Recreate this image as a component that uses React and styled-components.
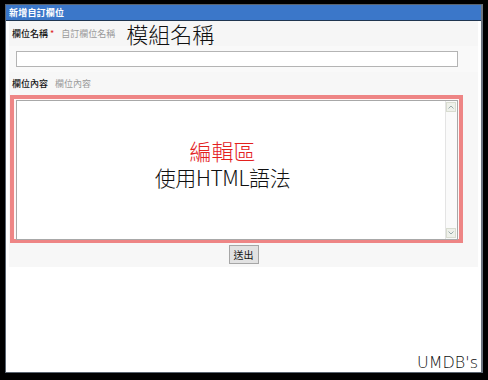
import React from "react";
import styled, { createGlobalStyle } from "styled-components";

const Global = createGlobalStyle`
  html, body { margin: 0; padding: 0; background: #000; }
  body { font-family: "Noto Sans CJK TC", "Noto Sans", sans-serif; }
  #root { width: 488px; height: 380px; overflow: hidden; }
`;

const Frame = styled.div`
  margin: 4px 5px 0 5px;
  width: 478px;
  height: 369px;
  box-sizing: border-box;
  background: #fff;
  border: 1px solid #5a6470;
  border-right: 2px solid #6c7480;
  display: flex;
  flex-direction: column;
`;

const TitleBar = styled.div`
  height: 15px;
  background: #3b77c9;
  border-bottom: 1px solid #1f3550;
  color: #fff;
  font-size: 9px;
  font-weight: 700;
  line-height: 15px;
  padding-left: 3px;
  letter-spacing: 0.2px;
`;

const Body = styled.div`
  flex: 1;
  display: flex;
  flex-direction: column;
  padding: 0 3px;
`;

const Panel = styled.div`
  background: #f7f7f7;
  display: flex;
  flex-direction: column;
`;

const Row = styled.div`
  height: ${(p) => p.$h}px;
  display: flex;
  align-items: ${(p) => p.$align || "center"};
  padding-left: ${(p) => p.$pl || 3}px;
  background: ${(p) => p.$bg || "#f6f6f6"};
  box-sizing: border-box;
  padding-top: ${(p) => p.$pt || 0}px;
`;

const Label = styled.span`
  font-size: 9px;
  color: #111;
  font-weight: 500;
`;

const Star = styled.span`
  color: #d22;
  font-size: 9px;
  margin-left: 2px;
`;

const Hint = styled.span`
  font-size: 9px;
  color: #9a9a9a;
  margin-left: ${(p) => p.$ml}px;
`;

const BigNote = styled.span`
  font-size: 22px;
  line-height: 25px;
  color: #111;
  margin-left: 11px;
  font-weight: 300;
`;

const TextInput = styled.div`
  width: 442px;
  height: 16px;
  box-sizing: border-box;
  border: 1px solid #b4b4b4;
  background: #fff;
`;

const EditorBox = styled.div`
  margin-left: 1px;
  width: 453px;
  height: 148px;
  box-sizing: border-box;
  border: 4px solid #ee8585;
  padding: 1px 0 0 2px;
  background: #fff6f6;
`;

const TextArea = styled.div`
  width: 442px;
  height: 140px;
  box-sizing: border-box;
  border: 1px solid #a8a8a8;
  background: #fff;
  display: flex;
`;

const EditorContent = styled.div`
  flex: 1;
  display: flex;
  flex-direction: column;
  align-items: center;
  padding-top: 36px;
  padding-right: 17px;
`;

const RedNote = styled.div`
  font-size: 22px;
  line-height: 27px;
  color: #e3211e;
  font-weight: 300;
`;

const BlackNote = styled.div`
  font-size: 21px;
  line-height: 27px;
  color: #111;
  letter-spacing: -0.4px;
  font-weight: 300;
`;

const ScrollBar = styled.div`
  width: 11px;
  border-left: 1px solid #e4e4e4;
  background: #fafafa;
  display: flex;
  flex-direction: column;
  justify-content: space-between;
  padding: 1px 0;
`;

const Arrow = styled.div`
  width: 10px;
  height: 10px;
  background: #eef0ea;
  border: 1px solid #d8dcd0;
  box-sizing: border-box;
  display: flex;
  align-items: center;
  justify-content: center;
`;

const ButtonRow = styled.div`
  display: flex;
  justify-content: center;
  padding: 2px 0 3px;
`;

const Button = styled.div`
  width: 30px;
  height: 19px;
  box-sizing: border-box;
  border: 1px solid #a6a6a6;
  background: #e2e2e2;
  font-size: 10px;
  color: #111;
  display: flex;
  align-items: center;
  justify-content: center;
`;

const Footer = styled.div`
  flex: 1;
  display: flex;
  align-items: flex-end;
  justify-content: flex-end;
`;

const Brand = styled.span`
  font-family: "DejaVu Sans", "Liberation Sans", sans-serif;
  font-size: 16px;
  line-height: 18px;
  color: #111;
  font-weight: 300;
`;

const Chevron = ({ up }) => (
  <svg width="6" height="4" viewBox="0 0 6 4">
    <path
      d={up ? "M0.5 3.5 L3 1 L5.5 3.5" : "M0.5 0.5 L3 3 L5.5 0.5"}
      fill="none"
      stroke="#9aa"
      strokeWidth="1"
    />
  </svg>
);

export default function App() {
  return (
    <>
      <Global />
      <Frame>
        <TitleBar>新增自訂欄位</TitleBar>
        <Body>
          <Panel>
            <Row $h={25}>
              <Label>欄位名稱</Label>
              <Star>*</Star>
              <Hint $ml={7}>自訂欄位名稱</Hint>
              <BigNote>模組名稱</BigNote>
            </Row>
            <Row $h={26} $pl={7} $pt={5} $align="flex-start" $bg="#f9f9f9">
              <TextInput />
            </Row>
            <Row $h={23} $bg="#f7f7f7">
              <Label>欄位內容</Label>
              <Hint $ml={7}>欄位內容</Hint>
            </Row>
            <EditorBox>
              <TextArea>
                <EditorContent>
                  <RedNote>編輯區</RedNote>
                  <BlackNote>使用HTML語法</BlackNote>
                </EditorContent>
                <ScrollBar>
                  <Arrow>
                    <Chevron up />
                  </Arrow>
                  <Arrow>
                    <Chevron />
                  </Arrow>
                </ScrollBar>
              </TextArea>
            </EditorBox>
            <ButtonRow>
              <Button>送出</Button>
            </ButtonRow>
          </Panel>
          <Footer>
            <Brand>UMDB's</Brand>
          </Footer>
        </Body>
      </Frame>
    </>
  );
}
